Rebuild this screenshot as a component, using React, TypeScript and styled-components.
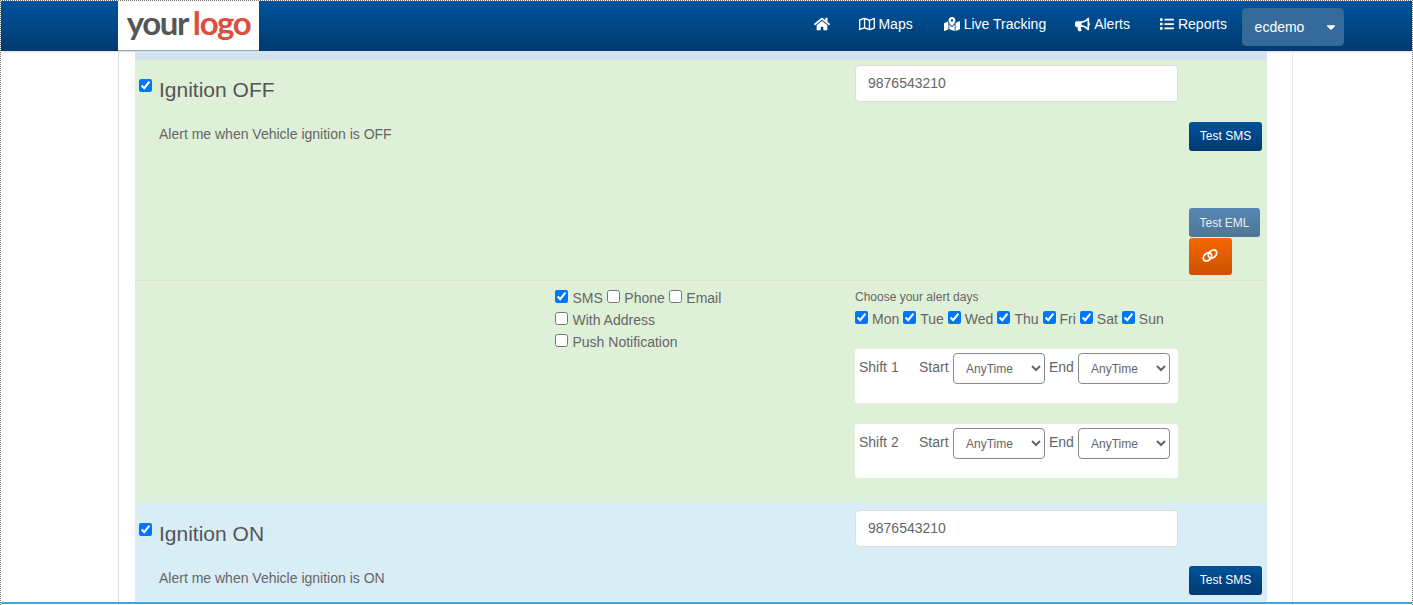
import styled, { createGlobalStyle } from "styled-components";
import { FaHome, FaRegMap, FaMapMarkedAlt, FaBullhorn, FaList, FaCaretDown } from "react-icons/fa";

const GlobalStyle = createGlobalStyle`
  html, body {
    margin: 0;
    padding: 0;
    height: 605px;
    overflow: hidden;
    background: #fff;
    font-family: "Liberation Sans", Arial, sans-serif;
    color: #555;
  }
  * { box-sizing: border-box; }
`;

const days = ["Mon", "Tue", "Wed", "Thu", "Fri", "Sat", "Sun"];

const ChainIcon = () => (
  <svg width="18" height="15" viewBox="0 0 20 16" fill="none" stroke="#fff" strokeWidth="2">
    <ellipse cx="7.2" cy="9.6" rx="5.2" ry="3.8" transform="rotate(-42 7.2 9.6)" />
    <ellipse cx="12.8" cy="6.4" rx="5.2" ry="3.8" transform="rotate(-42 12.8 6.4)" />
  </svg>
);

const Shift = ({ name }: { name: string }) => (
  <ShiftCard>
    <ShiftName>{name}</ShiftName>
    <ShiftLabel>Start</ShiftLabel>
    <TimeSelect defaultValue="AnyTime">
      <option>AnyTime</option>
    </TimeSelect>
    <ShiftEnd>End</ShiftEnd>
    <TimeSelect defaultValue="AnyTime">
      <option>AnyTime</option>
    </TimeSelect>
  </ShiftCard>
);

const App = () => {
  return (
    <Frame>
      <GlobalStyle />
      <Header>
        <Logo>
          <LogoDark>your</LogoDark>
          <LogoRed>logo</LogoRed>
        </Logo>
        <Nav>
          <NavItem $gap={29}>
            <FaHome size={16} />
          </NavItem>
          <NavItem $gap={31} $iconGap={3}>
            <FaRegMap size={16} />
            Maps
          </NavItem>
          <NavItem $gap={29}>
            <FaMapMarkedAlt size={16} />
            Live Tracking
          </NavItem>
          <NavItem $gap={30}>
            <FaBullhorn size={15} />
            Alerts
          </NavItem>
          <NavItem $gap={15}>
            <FaList size={14} />
            Reports
          </NavItem>
          <UserButton>
            <UserName>ecdemo</UserName>
            <UserCaret>
              <FaCaretDown size={14} />
            </UserCaret>
          </UserButton>
        </Nav>
      </Header>
      <Content>
        <Panel>
          <TopStrip />
          <AlertBlock $bg="#dff0d8">
            <MainRow>
              <TitleCell>
                <TitleLine>
                  <TitleCheck type="checkbox" defaultChecked />
                  <Title>Ignition OFF</Title>
                </TitleLine>
                <Description>Alert me when Vehicle ignition is OFF</Description>
              </TitleCell>
              <PhoneCell>
                <PhoneInput defaultValue="9876543210" />
              </PhoneCell>
              <ButtonCell>
                <SmsButton>Test SMS</SmsButton>
                <EmlButton>Test EML</EmlButton>
                <LinkButton>
                  <ChainIcon />
                </LinkButton>
              </ButtonCell>
            </MainRow>
            <OptionsRow>
              <Channels>
                <ChannelLine>
                  <Option>
                    <Check type="checkbox" defaultChecked />
                    SMS
                  </Option>
                  <Option>
                    <Check type="checkbox" />
                    Phone
                  </Option>
                  <Option>
                    <Check type="checkbox" />
                    Email
                  </Option>
                </ChannelLine>
                <ChannelLine>
                  <Option>
                    <Check type="checkbox" />
                    With Address
                  </Option>
                </ChannelLine>
                <ChannelLine>
                  <Option>
                    <Check type="checkbox" />
                    Push Notification
                  </Option>
                </ChannelLine>
              </Channels>
              <Schedule>
                <DaysTitle>Choose your alert days</DaysTitle>
                <DaysLine>
                  {days.map((day) => (
                    <DayOption key={day}>
                      <Check type="checkbox" defaultChecked />
                      {day}
                    </DayOption>
                  ))}
                </DaysLine>
                <Shift name="Shift 1" />
                <Shift name="Shift 2" />
              </Schedule>
            </OptionsRow>
          </AlertBlock>
          <AlertBlock $bg="#d9edf7" $pad={1}>
            <MainRow>
              <TitleCell>
                <TitleLine>
                  <TitleCheck type="checkbox" defaultChecked />
                  <Title>Ignition ON</Title>
                </TitleLine>
                <Description>Alert me when Vehicle ignition is ON</Description>
              </TitleCell>
              <PhoneCell $top={6}>
                <PhoneInput defaultValue="9876543210" />
              </PhoneCell>
              <ButtonCell>
                <SmsButton>Test SMS</SmsButton>
              </ButtonCell>
            </MainRow>
          </AlertBlock>
        </Panel>
      </Content>
      <BottomLine />
    </Frame>
  );
};

export default App;

const Frame = styled.div`
  position: relative;
  height: 605px;
  overflow: hidden;
  background: #fff;
  border-top: 1px dotted #777;
  border-left: 1px dotted #777;
  border-right: 1px dotted #777;
  display: flex;
  flex-direction: column;
`;

const Header = styled.header`
  flex: none;
  height: 50px;
  padding-left: 117px;
  padding-right: 68px;
  display: flex;
  justify-content: space-between;
  background: linear-gradient(to bottom, #00539c, #003a70);
  box-shadow: 0 1px 2px rgba(0, 0, 0, 0.15);
`;

const Logo = styled.div`
  width: 141px;
  height: 50px;
  background: #fff;
  display: flex;
  justify-content: center;
  align-items: center;
  gap: 5px;
  font-family: Lato, "Liberation Sans", sans-serif;
  font-size: 33px;
  font-weight: 700;
  letter-spacing: -1.4px;
  padding-bottom: 7px;
  border-bottom: 1px solid #8da3b8;
`;

const LogoDark = styled.span`
  color: #565656;
`;

const LogoRed = styled.span`
  color: #d9503f;
`;

const Nav = styled.nav`
  display: flex;
  align-items: flex-start;
`;

const NavItem = styled.div<{ $gap: number; $iconGap?: number }>`
  height: 46px;
  display: flex;
  align-items: center;
  gap: ${(props) => props.$iconGap ?? 4}px;
  margin-right: ${(props) => props.$gap}px;
  color: #fff;
  font-size: 14px;
`;

const UserButton = styled.div`
  margin-top: 7px;
  width: 102px;
  height: 38px;
  display: flex;
  border-radius: 4px;
  overflow: hidden;
  color: #fff;
  font-size: 14px;
  background: #366a9b;
  border: 1px solid #2f6a90;
`;

const UserName = styled.div`
  flex: 1;
  display: flex;
  align-items: center;
  justify-content: center;
`;

const UserCaret = styled.div`
  width: 27px;
  display: flex;
  align-items: center;
  justify-content: center;
  border-left: 2px solid #2c6fae;
`;

const Content = styled.main`
  flex: 1;
  width: 1175px;
  margin-left: 117px;
  padding: 0 25px 0 16px;
  border-left: 1px solid #ddd;
  border-right: 1px solid #e7e7e7;
  min-height: 0;
  overflow: hidden;
`;

const Panel = styled.div`
  width: 1132px;
`;

const TopStrip = styled.div`
  height: 9px;
  background: #d2e3ef;
`;

const AlertBlock = styled.section<{ $bg: string; $pad?: number }>`
  background: ${(props) => props.$bg};
  padding-top: ${(props) => props.$pad ?? 0}px;
`;

const MainRow = styled.div`
  display: grid;
  grid-template-columns: 720px 334px 1fr;
  min-height: 100px;
`;

const TitleCell = styled.div`
  padding: 14px 0 0 4px;
`;

const TitleLine = styled.div`
  display: flex;
  align-items: flex-start;
  gap: 6px;
`;

const Title = styled.div`
  font-size: 21px;
  line-height: 31px;
  color: #555;
`;

const Check = styled.input`
  width: 13px;
  height: 13px;
  margin: 0 4px 0 0;
  flex: none;
`;

const TitleCheck = styled(Check)`
  margin: 5px 1px 0 0;
`;

const Description = styled.div`
  margin: 19px 0 0 20px;
  font-size: 14px;
  line-height: 20px;
  color: #666;
`;

const PhoneCell = styled.div<{ $top?: number }>`
  padding-top: ${(props) => props.$top ?? 5}px;
`;

const PhoneInput = styled.input`
  width: 323px;
  height: 37px;
  padding: 0 12px 2px;
  font-family: "Liberation Sans", Arial, sans-serif;
  font-size: 14px;
  color: #666;
  background: #fff;
  border: 1px solid #ddd;
  border-radius: 4px;
`;

const ButtonCell = styled.div`
  display: flex;
  flex-direction: column;
  align-items: flex-start;
  padding-top: 62px;
`;

const TestButton = styled.button`
  height: 29px;
  padding: 0;
  font-family: "Liberation Sans", Arial, sans-serif;
  font-size: 12px;
  color: #fff;
  border: none;
  border-radius: 3px;
`;

const SmsButton = styled(TestButton)`
  width: 73px;
  padding-bottom: 2px;
  background: linear-gradient(to bottom, #00539c, #003a70);
`;

const EmlButton = styled(TestButton)`
  width: 71px;
  margin-top: 57px;
  background: linear-gradient(to bottom, #5588b4, #4f7595);
  color: #e6edf3;
`;

const LinkButton = styled.button`
  width: 43px;
  height: 37px;
  margin-top: 1px;
  padding: 0 1px 2px 0;
  display: flex;
  align-items: center;
  justify-content: center;
  border: none;
  border-radius: 3px;
  background: linear-gradient(to bottom, #f76700, #cc5200);
`;

const OptionsRow = styled.div`
  display: grid;
  grid-template-columns: 420px 300px 1fr;
  height: 223px;
  margin-top: 5px;
  border-top: 1px solid #d6e6cf;
`;

const Channels = styled.div`
  grid-column: 2;
  padding-top: 7px;
  display: flex;
  flex-direction: column;
  gap: 2px;
`;

const ChannelLine = styled.div`
  display: flex;
  align-items: center;
  gap: 4px;
  height: 20px;
  font-size: 14px;
  color: #666;
`;

const Option = styled.label`
  display: flex;
  align-items: flex-start;
  line-height: 20px;

  input {
    margin-top: 2px;
    margin-right: 4.5px;
  }
`;

const Schedule = styled.div`
  grid-column: 3;
  padding-top: 9px;
`;

const DaysTitle = styled.div`
  font-size: 12px;
  line-height: 15px;
  color: #666;
`;

const DaysLine = styled.div`
  display: flex;
  gap: 4px;
  margin-top: 5px;
  font-size: 14px;
  line-height: 18px;
  color: #666;
`;

const DayOption = styled.label`
  display: flex;
  align-items: flex-start;

  input {
    margin-top: 1px;
  }
`;

const ShiftCard = styled.div`
  width: 323px;
  height: 54px;
  margin-top: 21px;
  padding: 4px 8px 0 4px;
  display: flex;
  align-items: flex-start;
  background: #fff;
  border-radius: 3px;
  font-size: 14px;
  color: #666;
`;

const ShiftName = styled.div`
  width: 60px;
  line-height: 20px;
  margin-top: 4px;
`;

const ShiftLabel = styled.div`
  width: 34px;
  line-height: 20px;
  margin-top: 4px;
`;

const ShiftEnd = styled.div`
  width: 33px;
  padding-left: 4px;
  line-height: 20px;
  margin-top: 4px;
`;

const TimeSelect = styled.select`
  width: 92px;
  height: 31px;
  padding: 0 8px;
  font-family: "Liberation Sans", Arial, sans-serif;
  font-size: 12px;
  color: #666;
  background: #fff;
  border: 1px solid #888;
  border-radius: 4px;
`;

const BottomLine = styled.div`
  position: absolute;
  left: 0;
  right: 0;
  bottom: 1px;
  height: 2px;
  background: #45a5d8;
`;
